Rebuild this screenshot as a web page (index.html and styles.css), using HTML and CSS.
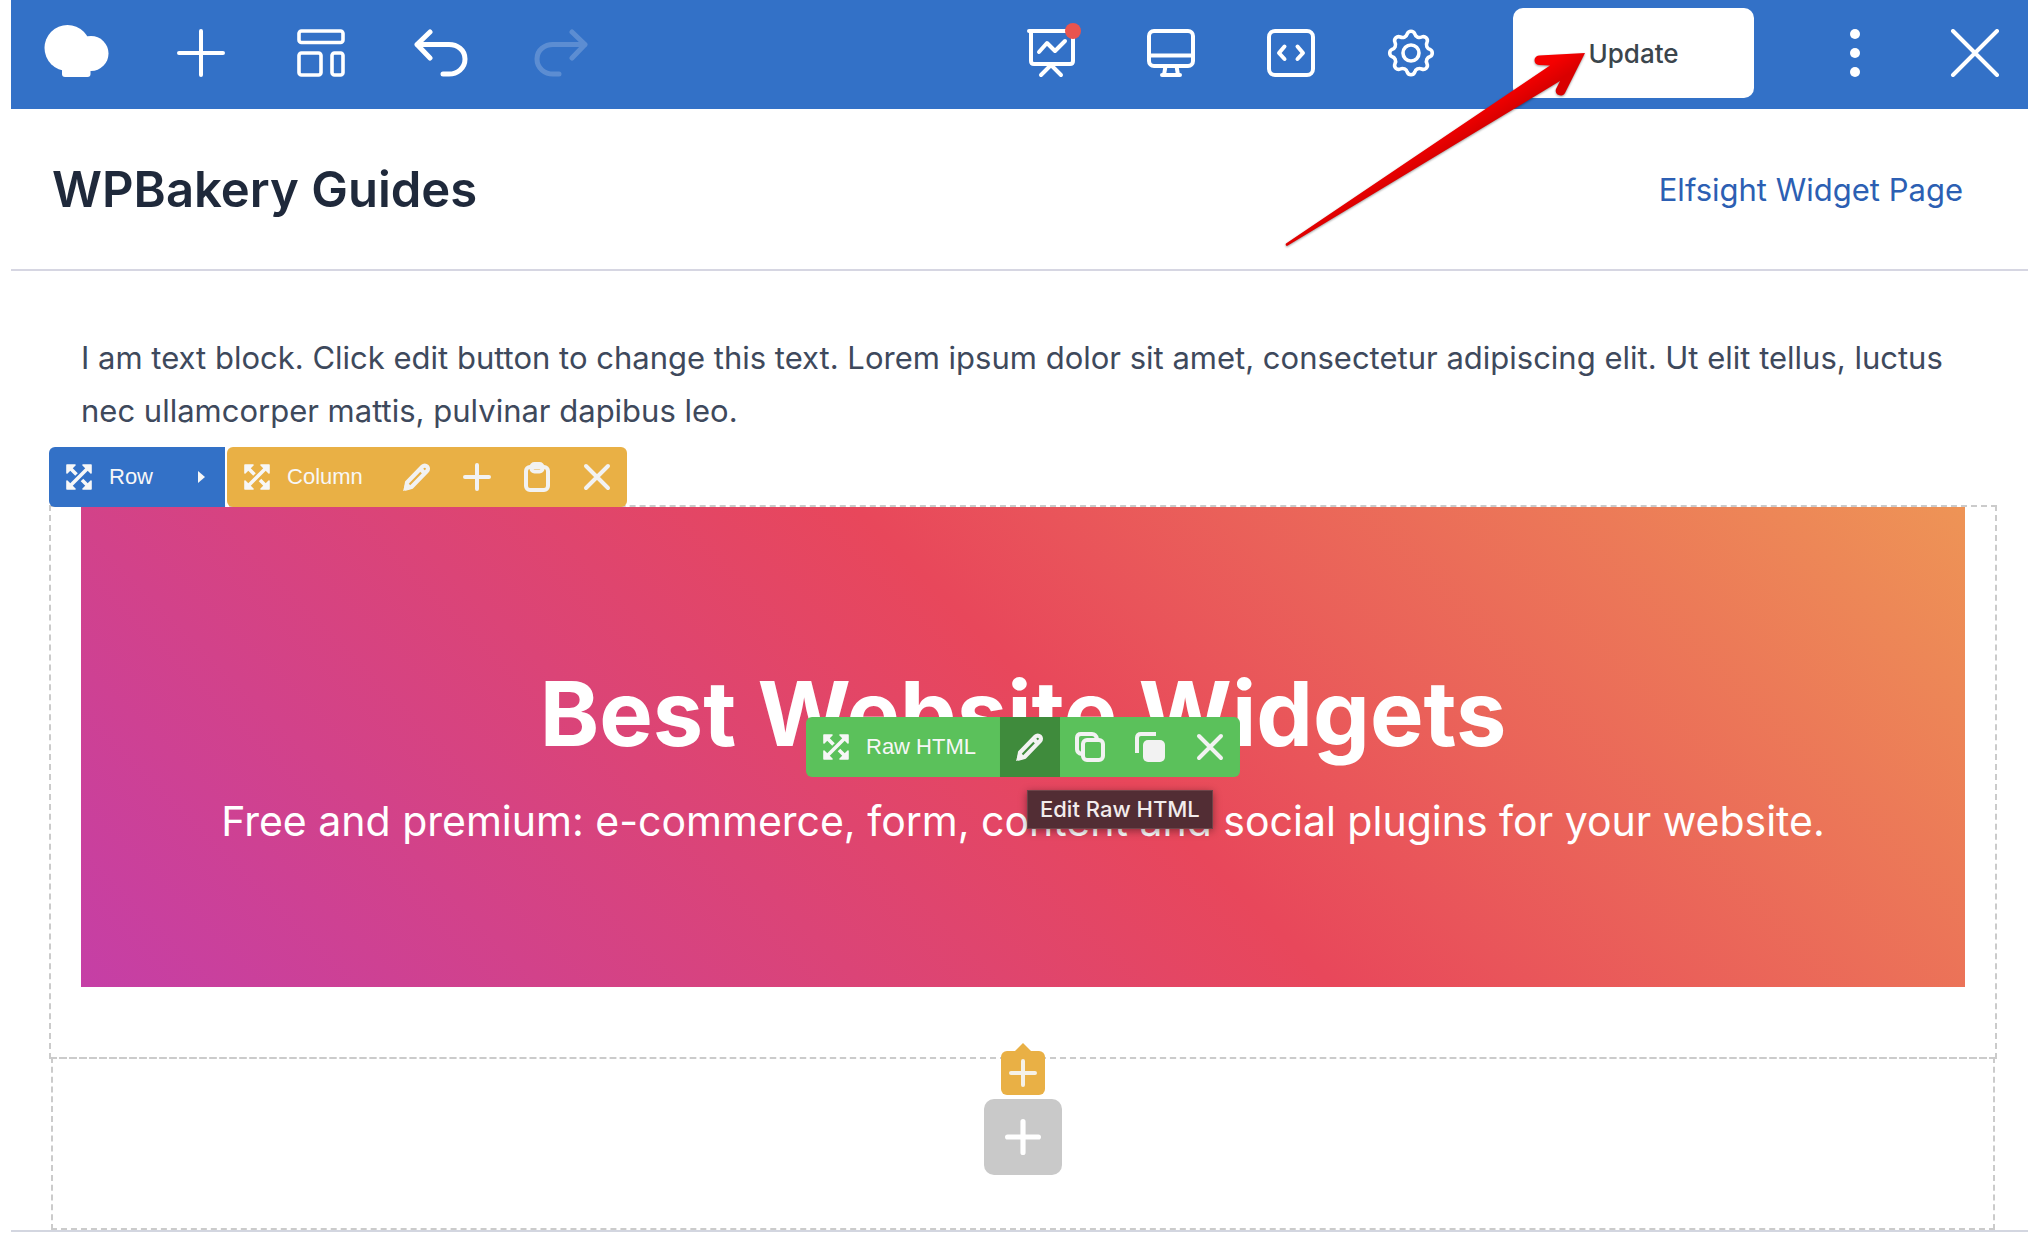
FILE: index.html
```html
<!DOCTYPE html>
<html lang="en">
<head>
<meta charset="utf-8">
<meta name="viewport" content="width=device-width, initial-scale=1">
<title>WPBakery Guides</title>
<link rel="stylesheet" href="styles.css">
</head>
<body>
<svg class="sprite" aria-hidden="true">
  <symbol id="i-move" viewBox="0 0 28 28"><path d="M23 5L5 23M5 5l6.500 6.500M17 17l6 6" stroke="currentColor" stroke-width="3.600"/><path d="M2 2h8L2 10zM26 2v8L18 2zM2 26v-8l8 8zM26 26h-8l8-8z" fill="currentColor" stroke="currentColor" stroke-width="1.600" stroke-linejoin="round"/></symbol>
  <symbol id="i-pencil" viewBox="0 0 30 30" fill="none" stroke="currentColor" stroke-width="4.200" stroke-linejoin="round"><path d="M5 20.500L20.500 4.500a3 3 0 0 1 4.500 4.500L9.500 25 4 26.500z"/><path d="M1 29l3-10 7 7z" fill="currentColor" stroke="none"/><path d="M18.500 7l4.500 4.500"/></symbol>
  <symbol id="i-plus" viewBox="0 0 28 28"><path d="M14 2v24M2 14h24" stroke="currentColor" stroke-width="4" stroke-linecap="round"/></symbol>
  <symbol id="i-close" viewBox="0 0 28 28"><path d="M3 3l22 22M25 3L3 25" stroke="currentColor" stroke-width="4" stroke-linecap="round"/></symbol>
  <symbol id="i-paste" viewBox="0 0 28 30" fill="none" stroke="currentColor" stroke-width="4"><rect x="3" y="5" width="22" height="23" rx="4"/><rect x="8.500" y="2" width="11" height="7.500" rx="3"/></symbol>
</svg>

<div class="editor">
  <header class="topbar">
    <a class="logo" href="#" aria-label="WPBakery">
      <svg width="66" height="54" viewBox="0 0 66 54" fill="#fff"><circle cx="24.500" cy="23" r="23"/><circle cx="48" cy="28.500" r="17.500"/><rect x="19" y="30" width="28.500" height="22" rx="3"/></svg>
    </a>
    <button class="tool" type="button" aria-label="Add element"><svg width="48" height="48" viewBox="0 0 48 48"><path d="M24 2v44M2 24h44"/></svg></button>
    <button class="tool" type="button" aria-label="Templates"><svg width="48" height="48" viewBox="0 0 48 48" stroke-width="3.600"><rect x="2" y="2" width="44" height="11.500" rx="2.500"/><rect x="2" y="24" width="22" height="22" rx="2.500"/><rect x="35" y="24" width="11" height="22" rx="2.500"/></svg></button>
    <button class="tool" type="button" aria-label="Undo"><svg width="54" height="48" viewBox="0 0 54 48" stroke-width="5"><path d="M16 3L3 15.500 16 29M3 15.500h32c8 0 16 5 16 14.500s-8 15-16 15h-6"/></svg></button>
    <button class="tool faded" type="button" aria-label="Redo" disabled><svg width="54" height="48" viewBox="0 0 54 48" stroke-width="5"><path d="M38 3l13 12.500L38 29M51 15.500H19c-8 0-16 5-16 14.500s8 15 16 15h6"/></svg></button>
    <span class="spring"></span>
    <button class="tool" type="button" aria-label="Seo"><svg class="seo" width="60" height="60" viewBox="0 0 60 60"><path d="M8 8h44M10 8v30q0 3 3 3h36q3 0 3-3V8M20 52l10-10 10 10M18 29l8-9 8 8 10-10"/><circle cx="52" cy="8" r="8" fill="#e9544f" stroke="none"/></svg></button>
    <button class="tool" type="button" aria-label="Responsive view"><svg width="48" height="48" viewBox="0 0 48 48"><rect x="2" y="2" width="44" height="35" rx="5"/><path d="M2 26.500h44M18.500 37l-1.500 9h-2 18-2l-1.500-9"/></svg></button>
    <button class="tool" type="button" aria-label="Custom code"><svg width="48" height="48" viewBox="0 0 48 48"><rect x="2" y="2" width="44" height="44" rx="6"/><path d="M17.500 17.500L12 24l5.500 6M30.500 17.500L36 24l-5.500 6"/></svg></button>
    <button class="tool" type="button" aria-label="Settings"><svg width="48" height="48" viewBox="0 0 48 48" stroke-width="3.600"><circle cx="24" cy="24" r="8"/><path d="M43.200 27.500A5 5 0 0 0 40 34.700A4 4 0 0 1 34.700 40A5 5 0 0 0 27.700 43.200A4 4 0 0 1 20.300 43.200A5 5 0 0 0 13.300 40A4 4 0 0 1 8 34.700A5 5 0 0 0 4.800 27.500A4 4 0 0 1 4.800 20.500A5 5 0 0 0 8 13.300A4 4 0 0 1 13.300 8A5 5 0 0 0 20.300 4.800A4 4 0 0 1 27.700 4.800A5 5 0 0 0 34.700 8A4 4 0 0 1 40 13.300A5 5 0 0 0 43.200 20.500A4 4 0 0 1 43.200 27.500z"/></svg></button>
    <div class="publish">
      <button class="update" type="button">Update</button>
      <svg class="pointer" width="302" height="200" viewBox="0 0 302 200" aria-hidden="true">
        <defs><linearGradient id="red" gradientUnits="userSpaceOnUse" x1="200" y1="54" x2="210" y2="70"><stop offset="0" stop-color="#f50000"/><stop offset="1" stop-color="#d90000"/></linearGradient></defs>
        <path fill="url(#red)" d="M300 3L254 5.500c-6 .5-6 9 0 9.500L265 15.500 1 193.500q-1 2 1 2.500L275 31l-4 8c-2 6 6 9 9 4z"/>
      </svg>
    </div>
    <button class="tool" type="button" aria-label="More"><svg width="48" height="48" viewBox="0 0 48 48"><g fill="#fff" stroke="none"><circle cx="24" cy="5" r="5"/><circle cx="24" cy="24" r="5"/><circle cx="24" cy="43" r="5"/></g></svg></button>
    <button class="tool close" type="button" aria-label="Close"><svg width="50" height="48" viewBox="0 0 50 48"><path d="M3 2l44 44M47 2L3 46"/></svg></button>
  </header>

  <div class="site-head">
    <h1>WPBakery Guides</h1>
    <a href="#">Elfsight Widget Page</a>
  </div>

  <main>
    <p class="intro">I am text block. Click edit button to change this text. Lorem ipsum dolor sit amet, consectetur adipiscing elit. Ut elit tellus, luctus nec ullamcorper mattis, pulvinar dapibus leo.</p>

    <div class="controls">
      <div class="bar row">
        <button class="label" type="button"><svg width="28" height="28"><use href="#i-move"/></svg>Row<svg class="caret" width="7" height="12" viewBox="0 0 7 12"><path d="M0 0l7 6-7 6z" fill="currentColor"/></svg></button>
      </div>
      <div class="bar column">
        <button class="label" type="button"><svg width="28" height="28"><use href="#i-move"/></svg>Column</button>
        <button type="button" aria-label="Edit column"><svg width="30" height="30"><use href="#i-pencil"/></svg></button>
        <button type="button" aria-label="Add to column"><svg width="28" height="28"><use href="#i-plus"/></svg></button>
        <button type="button" aria-label="Paste"><svg width="28" height="30"><use href="#i-paste"/></svg></button>
        <button type="button" aria-label="Delete column"><svg width="28" height="28"><use href="#i-close"/></svg></button>
      </div>
    </div>

    <section class="frame">
      <div class="banner">
        <h2>Best Website Widgets</h2>
        <p>Free and premium: e-commerce, form, content and social plugins for your website.</p>
        <div class="bar element">
          <button class="label" type="button"><svg width="28" height="28"><use href="#i-move"/></svg>Raw HTML</button>
          <button class="active" type="button" aria-label="Edit Raw HTML"><svg width="30" height="30"><use href="#i-pencil"/></svg></button>
          <button type="button" aria-label="Clone"><svg width="30" height="30" viewBox="0 0 30 30" fill="none" stroke="currentColor" stroke-width="4"><rect x="8" y="8" width="20" height="20" rx="4"/><path d="M7 22q-5-1-5-5V6q0-4 4-4h11q4 0 5 5"/></svg></button>
          <button type="button" aria-label="Copy"><svg width="30" height="30" viewBox="0 0 30 30" fill="none" stroke="currentColor" stroke-width="4"><rect x="8" y="8" width="22" height="22" rx="5" fill="currentColor" stroke="none"/><path d="M2 21V6q0-4 4-4h15"/></svg></button>
          <button type="button" aria-label="Delete"><svg width="28" height="28"><use href="#i-close"/></svg></button>
          <span class="tip" role="tooltip">Edit Raw HTML</span>
        </div>
      </div>
    </section>

    <section class="empty">
      <button class="add-column" type="button" aria-label="Add column"><svg width="28" height="28"><use href="#i-plus"/></svg></button>
      <button class="add-row" type="button" aria-label="Add element"><svg width="36" height="36" viewBox="0 0 28 28"><use href="#i-plus"/></svg></button>
    </section>
  </main>
  <footer class="foot"></footer>
</div>
</body>
</html>
```
FILE: styles.css
```css
* { box-sizing: border-box; }
body {
  margin: 0;
  background: #fff;
  font-family: Inter, "Liberation Sans", sans-serif;
  color: #3e495c;
}
h1, h2, p { margin: 0; }
button { border: 0; padding: 0; background: none; color: inherit; font: inherit; }
svg { display: block; flex: none; }
.sprite { position: absolute; width: 0; height: 0; }
.editor { margin-left: 11px; }

/* Editor toolbar */
.topbar { display: flex; align-items: stretch; height: 109px; background: #3371c7; }
.logo { width: 130px; padding: 25px 0 0 32px; }
.tool { display: flex; align-items: flex-start; justify-content: center; width: 120px; padding-top: 29px; }
.tool svg { fill: none; stroke: #fff; stroke-linecap: round; stroke-linejoin: round; }
.tool svg:not([stroke-width]) { stroke-width: 4px; }
.tool .seo { margin-top: -6px; }
.close { width: 106px; margin-left: 7px; }
.faded { opacity: .2; }
.spring { flex: 1; }
.publish { position: relative; padding: 8px 41px 11px 42px; }
.update { width: 241px; height: 90px; border-radius: 10px; background: #fff; color: #3b454c; font-size: 26px; font-weight: 500; }
.pointer { position: absolute; top: 50px; right: 208px; filter: drop-shadow(0 1px 1px rgba(0, 0, 0, .4)); }

/* Site header */
.site-head { display: flex; align-items: center; justify-content: space-between; height: 162px; padding: 0 65px 0 41px; border-bottom: 2px solid #d6d6e2; }
h1 { color: #1f293b; font-size: 49px; font-weight: 600; }
.site-head a { color: #2c5fb3; font-size: 31px; text-decoration: none; }

main { padding: 60px 31px 0 38px; }
.intro { padding: 0 32px; font-size: 31px; line-height: 53px; }

/* Control bars */
.controls { position: relative; z-index: 1; display: flex; gap: 2px; margin-top: 10px; }
.bar { display: flex; height: 60px; border-radius: 6px; color: #f2f2f2; font: 22px "Liberation Sans", sans-serif; }
.bar button { display: flex; align-items: center; justify-content: center; width: 60px; }
.bar .label { justify-content: flex-start; width: auto; padding: 0 24px 0 16px; gap: 16px; color: #f7f7f7; }
.row { background: #3371c7; border-radius: 6px 0 0 6px; }
.row .label { padding-right: 20px; }
.row .caret { margin-left: 29px; }
.column { background: #e9b045; }

/* Row with the banner */
.frame { height: 554px; margin-top: -2px; padding: 0 30px; border: 2px dashed #cbcbcb; }
.banner { position: relative; display: flex; flex-direction: column; align-items: center; height: 480px; padding-top: 152px; background: linear-gradient(45deg, #c53fa6, #e8475b 53%, #ee9456); color: #fff; text-align: center; }
h2 { font-size: 90px; line-height: 110px; font-weight: 700; }
.banner p { font-size: 41px; line-height: 60px; margin-top: 22px; }
.element { position: absolute; top: 210px; left: 50%; transform: translateX(-50%); background: #5bc15b; white-space: nowrap; }
.active { background: #3f8b3c; }
.tip { position: absolute; top: 73px; left: 221px; padding: 0 12px; border: 1px solid #6d4449; background: #522d34; box-shadow: 0 2px 8px rgba(0, 0, 0, .4); color: #f2ecec; font: 500 22px/37px Inter, sans-serif; }

/* Empty row */
.empty { position: relative; display: flex; flex-direction: column; align-items: center; height: 173px; margin: -2px 2px 0; padding-top: 40px; border: 2px dashed #cbcbcb; }
.add-column { position: absolute; top: -8px; display: grid; place-items: center; width: 44px; height: 44px; border-radius: 6px; background: #e9b045; color: #f5f1e8; }
.add-column::before { content: ""; position: absolute; top: -8px; border: 8px solid transparent; border-top: 0; border-bottom-color: #e9b045; }
.add-row { display: grid; place-items: center; width: 78px; height: 76px; border-radius: 10px; background: #c9c9c9; color: #fff; }
.foot { height: 20px; border-top: 2px solid #d3d6e0; }
```
